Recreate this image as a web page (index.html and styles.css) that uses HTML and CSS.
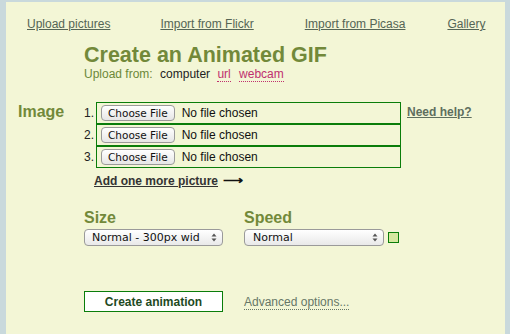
FILE: index.html
```html
<!DOCTYPE html>
<html lang="en">
<head>
  <meta charset="UTF-8">
  <title>Create an Animated GIF</title>
  <link rel="stylesheet" href="styles.css">
</head>
<body>

<div class="panel">
  <nav class="tabs">
    <a href="#">Upload pictures</a>
    <a href="#">Import from Flickr</a>
    <a href="#">Import from Picasa</a>
    <a href="#">Gallery</a>
  </nav>

  <div class="intro">
    <h1>Create an Animated GIF</h1>
    <p class="sources">
      <span class="sources-label">Upload from:</span>
      <span class="current">computer</span>
      <a href="#">url</a>
      <a href="#">webcam</a>
    </p>
  </div>

  <div class="image-row">
    <h2 class="side-label">Image</h2>
    <div class="files">
      <ol class="file-list">
        <li><span class="num">1.</span><div class="file-box"><input type="file"></div></li>
        <li><span class="num">2.</span><div class="file-box"><input type="file"></div></li>
        <li><span class="num">3.</span><div class="file-box"><input type="file"></div></li>
      </ol>
      <p class="add-more"><a href="#">Add one more picture</a> <span class="arrow">&#10230;</span></p>
    </div>
    <a class="help" href="#">Need help?</a>
  </div>

  <div class="options">
    <div class="option">
      <h3>Size</h3>
      <div class="select-wrap size-select">
        <select>
          <option>Normal - 300px wide</option>
          <option>Small - 200px wide</option>
          <option>Large - 400px wide</option>
        </select>
        <svg class="caret" width="6" height="9" viewBox="0 0 6 9"><path d="M0.5 3.5 L3 0.5 L5.5 3.5 Z M0.5 5.5 L3 8.5 L5.5 5.5 Z" fill="#555"/></svg>
      </div>
    </div>
    <div class="option">
      <h3>Speed</h3>
      <div class="speed-row">
        <div class="select-wrap speed-select">
          <select>
            <option>Normal</option>
            <option>Slow</option>
            <option>Fast</option>
          </select>
          <svg class="caret" width="6" height="9" viewBox="0 0 6 9"><path d="M0.5 3.5 L3 0.5 L5.5 3.5 Z M0.5 5.5 L3 8.5 L5.5 5.5 Z" fill="#555"/></svg>
        </div>
        <span class="swatch"></span>
      </div>
    </div>
  </div>

  <div class="actions">
    <button class="create">Create animation</button>
    <a class="advanced" href="#">Advanced options...</a>
  </div>
</div>

</body>
</html>
```

FILE: styles.css
```css
body {
  margin: 0;
  background: #c9d9dc;
  font-family: 'Liberation Sans', Arial, sans-serif;
}

.panel {
  margin: 2px 5px 0 6px;
  height: 332px;
  background: #f3f6d6;
  box-sizing: border-box;
}

.tabs {
  display: flex;
  padding: 15px 0 0 21px;
}

.tabs a {
  font-size: 12px;
  line-height: 15px;
  color: #556555;
}

.tabs a:nth-child(2) {
  margin-left: 50px;
}

.tabs a:nth-child(3) {
  margin-left: 51px;
}

.tabs a:nth-child(4) {
  margin-left: 42px;
}

.intro {
  padding-left: 78px;
  margin-top: 12px;
}

h1 {
  margin: 0;
  font-size: 21.5px;
  line-height: 22px;
  color: #72893a;
}

.sources {
  margin: 1px 0 0;
  font-size: 12px;
  line-height: 14px;
}

.sources-label {
  color: #6c8838;
  margin-right: 4px;
}

.current {
  color: #222;
  margin-right: 4px;
}

.sources a {
  color: #c0306e;
  text-decoration: none;
  border-bottom: 1px dotted #c0306e;
  margin-right: 5px;
}

.image-row {
  display: flex;
  margin-top: 21px;
}

.side-label {
  width: 78px;
  margin: 0;
  padding: 1px 0 0 12px;
  box-sizing: border-box;
  font-size: 16px;
  color: #72893a;
}

.file-list {
  list-style: none;
  margin: 0;
  padding: 0;
}

.file-list li {
  display: flex;
  align-items: center;
  height: 22px;
}

.num {
  width: 12px;
  font-size: 12px;
  color: #222;
}

.file-box {
  width: 305px;
  height: 22px;
  box-sizing: border-box;
  border: 1px solid #0a7d0a;
  display: flex;
  align-items: center;
  padding-left: 4px;
}

.file-box input {
  font-family: 'Liberation Sans', Arial, sans-serif;
  font-size: 12px;
  color: #111;
}

.file-box input::file-selector-button {
  font-family: 'DejaVu Sans', sans-serif;
  font-size: 10.5px;
  color: #111;
  height: 16px;
  padding: 0 6px;
  margin-right: 7px;
  border: 1px solid #9a9a9a;
  border-radius: 4px;
  background: linear-gradient(#ffffff, #e6e6e6);
}

.add-more {
  margin: 4px 0 0 10px;
  font-size: 12px;
  font-weight: bold;
}

.add-more a {
  color: #333;
}

.arrow {
  font-size: 14px;
  color: #111;
  margin-left: 2px;
}

.help {
  margin: 3px 0 0 6px;
  height: 14px;
  font-size: 12px;
  font-weight: bold;
  color: #5e6e5e;
}

.options {
  display: flex;
  gap: 21px;
  padding-left: 78px;
  margin-top: 21px;
}

.option h3 {
  margin: 0 0 2px;
  font-size: 16px;
  line-height: 18px;
  color: #72893a;
}

.select-wrap {
  position: relative;
}

.select-wrap select {
  appearance: none;
  height: 17px;
  border: 1px solid #9a9a9a;
  border-radius: 4px;
  background: linear-gradient(#ffffff, #e9e9e9);
  font-family: 'DejaVu Sans', sans-serif;
  font-size: 11px;
  color: #111;
  padding: 0 22px 0 7px;
  display: block;
}

.size-select select {
  width: 139px;
}

.speed-select select {
  width: 140px;
  padding-left: 8px;
}

.caret {
  position: absolute;
  right: 6px;
  top: 4px;
}

.speed-row {
  display: flex;
  align-items: center;
  gap: 4px;
}

.swatch {
  width: 9px;
  height: 9px;
  border: 1px solid #0a7d0a;
  background: #d6e8a0;
}

.actions {
  display: flex;
  align-items: center;
  gap: 21px;
  padding-left: 78px;
  margin-top: 45px;
}

.create {
  width: 139px;
  height: 21px;
  background: #fff;
  border: 1px solid #0a7d0a;
  font-family: 'Liberation Sans', Arial, sans-serif;
  font-size: 12px;
  font-weight: bold;
  color: #1f4a1f;
}

.advanced {
  font-size: 12px;
  color: #667766;
  text-decoration: none;
  border-bottom: 1px dotted #667766;
  margin-top: 2px;
}
```
